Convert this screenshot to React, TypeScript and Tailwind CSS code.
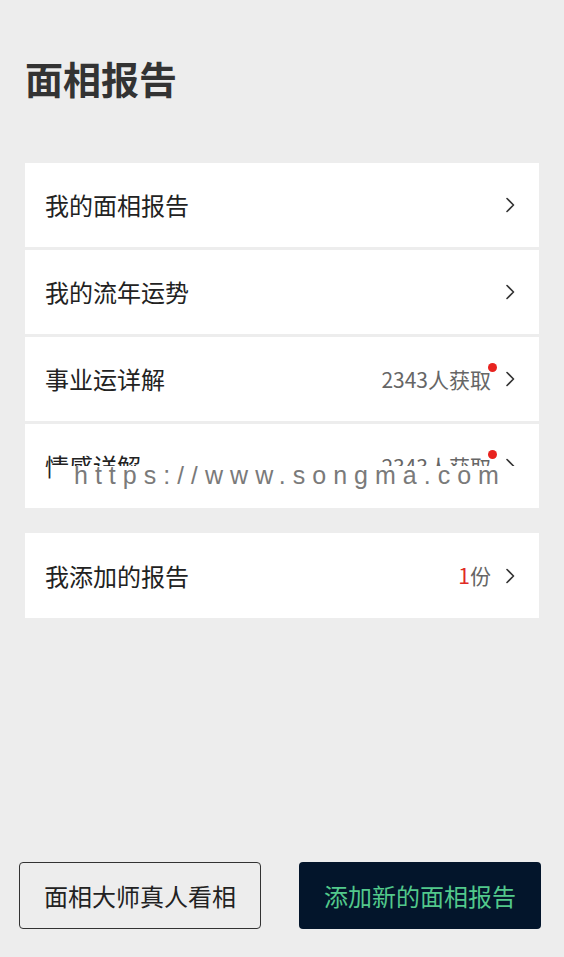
import { Fragment } from 'react';

const font = { fontFamily: '"Noto Sans CJK SC", "Noto Sans", sans-serif' };

interface Row {
  title: string;
  extra?: 'count' | 'copies';
}

const rows: Row[] = [
  { title: '我的面相报告' },
  { title: '我的流年运势' },
  { title: '事业运详解', extra: 'count' },
  { title: '情感详解', extra: 'count' },
];

function Chevron() {
  return (
    <svg className="w-[10px] h-[16px] shrink-0" viewBox="0 0 10 16" fill="none" stroke="#333" strokeWidth={1.6}>
      <path d="M2 1.5l6.5 6.5L2 14.5" strokeLinecap="round" strokeLinejoin="round" />
    </svg>
  );
}

function ListRow({ row }: { row: Row }) {
  return (
    <div className="h-[84px] bg-white flex items-center justify-between pl-[20px] pr-[24px]">
      <span className="text-[24px] text-[#222] leading-none">{row.title}</span>
      <div className="flex items-center gap-[14px]">
        {row.extra === 'count' && (
          <span className="relative text-[21px] text-[#666] leading-none">
            2343人获取
            <span className="absolute -top-[6px] -right-[6px] w-[9px] h-[9px] rounded-full bg-[#e8231f]" />
          </span>
        )}
        <Chevron />
      </div>
    </div>
  );
}

export default function App() {
  return (
    <div className="w-[564px] h-[957px] bg-[#ededed] flex flex-col relative" style={font}>
      {/* Title */}
      <h1 className="pl-[25px] pt-[59px] text-[38px] font-bold text-[#333] leading-none h-[163px]">
        面相报告
      </h1>

      {/* Main list */}
      <div className="mx-[25px] flex flex-col gap-[3px]">
        {rows.map((row) => (
          <Fragment key={row.title}>
            <ListRow row={row} />
          </Fragment>
        ))}
      </div>

      {/* My added reports */}
      <div className="mx-[25px] mt-[25px] h-[85px] bg-white flex items-center justify-between pl-[20px] pr-[24px]">
        <span className="text-[24px] text-[#222] leading-none">我添加的报告</span>
        <div className="flex items-center gap-[14px]">
          <span className="text-[21px] text-[#666] leading-none">
            <span className="text-[#e02a24]">1</span>份
          </span>
          <Chevron />
        </div>
      </div>

      {/* Bottom buttons */}
      <div className="mt-auto mb-[28px] flex justify-between pl-[19px] pr-[23px]">
        <button className="w-[242px] h-[67px] border border-[#333] rounded-[4px] text-[24px] text-[#222] bg-transparent">
          面相大师真人看相
        </button>
        <button className="w-[242px] h-[67px] rounded-[4px] text-[24px] text-[#52c98b] bg-[#03152b]">
          添加新的面相报告
        </button>
      </div>

      {/* Watermark band */}
      <div className="absolute left-[52px] top-[466px] w-[487px] h-[27px] bg-white overflow-hidden">
        <span
          className="absolute left-[22px] -top-[3px] text-[25px] leading-none text-[#7a7a7a] tracking-[7px] whitespace-nowrap"
          style={{ fontFamily: '"Liberation Sans", sans-serif' }}
        >
          https://www.songma.com
        </span>
      </div>
    </div>
  );
}
